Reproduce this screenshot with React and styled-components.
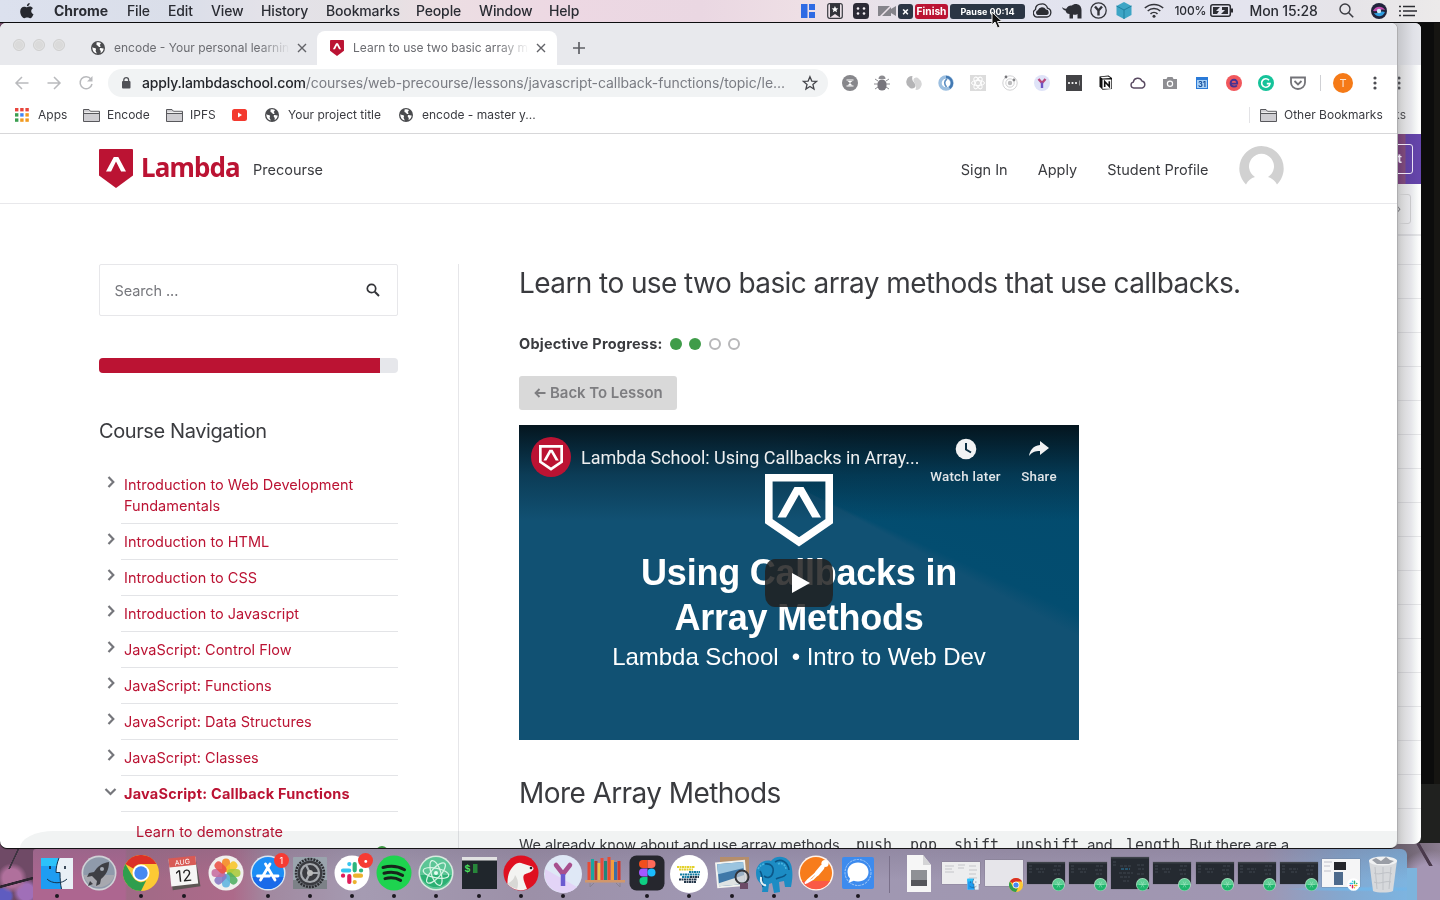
import React from "react";
import styled, { createGlobalStyle, css } from "styled-components";

const ui = `Inter, "Liberation Sans", sans-serif`;
const red = "#bb1333";

const GlobalStyle = createGlobalStyle`
  * { box-sizing: border-box; }
  body { margin: 0; font-family: ${ui}; overflow: hidden; }
  svg { display: block; flex: none; }
`;

/* ---------- desktop ---------- */
const Desktop = styled.div`
  position: relative;
  width: 1440px;
  height: 900px;
  overflow: hidden;
  display: flex;
  flex-direction: column;
  background:
    linear-gradient(115deg, transparent 0 40%, #3c3340 41% 44%, transparent 45%) 0 849px / 34px 20px no-repeat,
    linear-gradient(165deg, transparent 0 46%, #2e2530 48% 54%, transparent 56%) 0 870px / 34px 24px no-repeat,
    radial-gradient(circle at 12px 878px, #b0709c 0 9px, transparent 15px),
    radial-gradient(circle at 26px 892px, #a06fb8 0 8px, transparent 13px),
    radial-gradient(circle at 4px 896px, #5f5cc0 0 7px, transparent 10px),
    linear-gradient(60deg, transparent 0 45%, #4a3a4c 47% 53%, transparent 55%) 1408px 842px / 32px 24px no-repeat,
    linear-gradient(#7db4dd, #7db4dd) 1407px 868px / 10px 32px no-repeat,
    radial-gradient(circle at 1430px 884px, #a596b4 0 20px, transparent 34px),
    linear-gradient(90deg, #6f4a66 0 34px, #7b7484 60px 1380px, #6a5f6c 1400px, #8b7d90 1440px);
`;
const Stage = styled.div`
  position: relative;
  height: 826px;
  flex: none;
`;
const Terminal = styled.div`
  position: absolute;
  left: 1380px;
  top: 0;
  width: 60px;
  height: 820px;
  background: linear-gradient(90deg, #0c0c0c 0 54px, #161512 54px);
  border-bottom: 59px solid #20211f;
`;
const BackWindow = styled.div`
  position: absolute;
  left: 1300px;
  top: 0;
  width: 121px;
  height: 821px;
  display: flex;
  flex-direction: column;
  background: linear-gradient(90deg, #bfbfc1 97px, #d2d2d3 101px, #dcdcde 105px, #e6e6ea 111px, #f1f3f3 115px, #fdfdfd 119px);
  border-radius: 0 6px 7px 0;
  overflow: hidden;
  color: #4c4c50;
  font-size: 12px;
`;
const BackTabs = styled.div`
  flex: none;
  height: 42px;
  background: linear-gradient(90deg, #c4c5c9 97px, #e0e1e7 113px, #e6e7ec);
`;
const BackTools = styled.div`
  flex: none;
  height: 69px;
  padding: 11px 20px 0 0;
  display: flex;
  flex-direction: column;
  align-items: flex-end;
  gap: 18px;
  line-height: 14px;
  div { margin-right: -5px; }
`;
const BackBanner = styled.div`
  flex: none;
  height: 50px;
  background: linear-gradient(90deg, #6b3b72 97px, #7d4a78 105px, #5f40a0 106px, #6545ac);
  display: flex;
  justify-content: flex-end;
  padding: 10px 8px;
  span {
    width: 40px; height: 30px; border: 1px solid #e9e2f2; border-radius: 3px;
    color: #e7e0ee; font-weight: 700; font-size: 12px; line-height: 28px; text-align: right; padding-right: 10px;
  }
`;
const BackList = styled.div`
  flex: 1;
  min-height: 0;
  padding-top: 10px;
  span {
    display: block; margin: 0 10px 10px auto; width: 60px; height: 30px; border: 1px solid #c8c8ca; border-radius: 3px;
    text-align: right; padding-right: 9px; line-height: 27px; color: #77777c;
  }
  i { display: block; height: 34px; border-top: 1px solid rgba(120,120,130,.17); }
  i:first-of-type { height: 30px; border-top-width: 2px; }
`;
const FrontWindow = styled.div`
  position: absolute;
  left: 0;
  top: 0;
  width: 1397px;
  height: 825px;
  background: #fff;
  border-radius: 6px 6px 7px 7px;
  overflow: hidden;
  display: flex;
  flex-direction: column;
  box-shadow: 1px 0 0 #aeaeb0, 0 1px 1px 0 #0a0a0a;
`;

/* ---------- menu bar ---------- */
const Bar = styled.div`
  height: 23px;
  flex: none;
  display: flex;
  align-items: center;
  position: relative;
  z-index: 2;
  padding-left: 20px;
  border-bottom: 1px solid #0c0c0e;
  font-weight: 500;
  font-size: 14px;
  letter-spacing: -0.15px;
  color: #2a2c33;
  white-space: nowrap;
  background: linear-gradient(90deg, #dce1ee 0, #dadee9 180px, #e3e2e9 260px, #e4e1e4 380px, #ecdfe3 430px, #edd8e3 560px, #ead7e2 700px, #eedfe5 800px, #e8e2ea 880px, #e2e3ef 1000px, #e4e4ee 1250px, #e6e4e8 1350px, #eceaea);
`;
const Slot = styled.span`
  flex: none;
  display: flex;
  align-items: center;
  padding-bottom: 1px;
  width: ${(p) => p.$w}px;
  margin-left: ${(p) => p.$gap || 0}px;
  ${(p) => p.$bold && css`font-weight: 700; letter-spacing: 0;`}
  ${(p) => p.$size && css`font-size: ${p.$size}px;`}
`;
const Pill = styled.span`
  flex: none;
  display: flex;
  align-items: center;
  justify-content: center;
  height: 15px;
  width: ${(p) => p.$w}px;
  margin-left: ${(p) => p.$gap || 0}px;
  border-radius: 3px;
  background: ${(p) => p.$bg};
  color: #fff;
  font-weight: 700;
  letter-spacing: 0;
  font-size: ${(p) => p.$size}px;
`;
const Cursor = styled.svg`
  position: absolute;
  left: 990px;
  top: 11px;
  z-index: 3;
`;

/* ---------- browser chrome ---------- */
const Tabs = styled.div`
  height: 42px;
  flex: none;
  background: #e8e9ed;
  display: flex;
  align-items: flex-end;
`;
const Lights = styled.div`
  display: flex;
  gap: 8px;
  padding: 0 26px 14px 13px;
  i { width: 12px; height: 12px; border-radius: 50%; background: #dadada; border: 1px solid #d0d0d0; box-shadow: inset 0 0 0 1px #e3e3e3; }
`;
const Tab = styled.div`
  display: flex;
  align-items: center;
  width: ${(p) => (p.$active ? 240 : 226)}px;
  height: 34px;
  padding: 0 10px 0 ${(p) => (p.$active ? 13 : 0)}px;
  border-radius: 8px 8px 0 0;
  background: ${(p) => (p.$active ? "#fff" : "transparent")};
  font-size: 12px;
  color: #6b6c71;
`;
const TabTitle = styled.span`
  width: 177px;
  margin: 0 6px 0 9px;
  padding-bottom: 1px;
  overflow: hidden;
  white-space: nowrap;
  mask-image: linear-gradient(90deg, #000 145px, transparent 176px);
`;
const NewTab = styled.div`padding: 0 0 11px 16px;`;
const Tools = styled.div`
  height: 36px;
  flex: none;
  display: flex;
  align-items: center;
  padding-left: 14px;
`;
const NavIcons = styled.div`display: flex; gap: 16px; width: 94px;`;
const Omnibox = styled.div`
  width: 720px;
  height: 28px;
  border-radius: 14px;
  background: #f1f3f4;
  display: flex;
  align-items: center;
  padding: 0 10px 0 11px;
  font-size: 14px;
  color: #7a7c83;
  white-space: nowrap;
  b { font-weight: 500; color: #24262b; letter-spacing: -0.17px; }
`;
const Url = styled.span`width: 660px; margin-left: 9px; padding-bottom: 1px; letter-spacing: -0.075px;`;
const Ext = styled.div`
  width: 32px;
  display: flex;
  justify-content: center;
`;
const Extensions = styled.div`display: flex; align-items: center; margin-left: 6px;`;
const Rule = styled.div`width: 1px; height: 16px; background: #cfd0d4; margin: 0 12px 0 6px;`;
const Avatar = styled.div`
  width: 20px; height: 20px; border-radius: 50%; background: #f57a17; color: #fbe3cf;
  font-size: 11px; line-height: 20px; text-align: center; margin-right: 20px;
`;
const Bookmarks = styled.div`
  height: 33px;
  flex: none;
  display: flex;
  align-items: flex-start;
  padding: 6px 0 0 15px;
  border-bottom: 1px solid #d7d7d9;
  font-size: 12px;
  line-height: 15px;
  color: #3a3b40;
  white-space: nowrap;
`;
const Mark = styled.div`
  height: 16px;
  display: flex;
  align-items: flex-start;
  gap: ${(p) => p.$g || 8}px;
  width: ${(p) => p.$w}px;
  svg { margin-block: auto; }
  ${(p) => p.$last && css`margin-left: auto; padding-left: 10px; border-left: 1px solid #e3e3e6;`}
`;

/* ---------- page ---------- */
const Page = styled.div`
  position: relative;
  flex: 1;
  min-height: 0;
  color: #3a3b3f;
`;
const SiteHeader = styled.div`
  height: 70px;
  border-bottom: 1px solid #e8e8eb;
  display: flex;
  align-items: flex-start;
  padding: 15px 113px 0 99px;
  font-size: 14.5px;
`;
const Wordmark = styled.span`
  width: 98px;
  margin: 0 0 0 8px;
  font: 700 26px/37px "Noto Sans", sans-serif;
  letter-spacing: -0.85px;
  color: ${red};
`;
const NavLink = styled.span`
  margin-left: ${(p) => p.$gap}px;
  padding-top: 12px;
  line-height: 18px;
  white-space: nowrap;
`;
const Gravatar = styled.svg`margin: -3px 0 0 30.5px;`;
const Spacer = styled.div`flex: 1;`;
const Columns = styled.div`
  display: flex;
  padding: 60px 0 0 99px;
  height: 644px;
  overflow: hidden;
`;
const Sidebar = styled.div`
  width: 360px;
  padding-right: 60px;
  border-right: 1px solid #e6e6e9;
  flex: none;
`;
const SearchBox = styled.div`
  height: 52px;
  border: 1px solid #e7e7ea;
  border-radius: 2px;
  display: flex;
  align-items: center;
  justify-content: space-between;
  padding: 0 17px 0 14.5px;
  font-size: 14.5px;
  letter-spacing: -0.1px;
  color: #77787d;
`;
const Progress = styled.div`
  height: 15px;
  margin-top: 42px;
  border-radius: 4px;
  background: #e6e7eb;
  overflow: hidden;
  div { width: 94%; height: 100%; background: ${red}; }
`;
const SideTitle = styled.h3`
  margin: 44px 0 22px;
  font-size: 20px;
  line-height: 28px;
  font-weight: 400;
  letter-spacing: -0.4px;
`;
const Item = styled.div`
  display: flex;
  padding-left: 5px;
  color: ${red};
  font-size: 14.5px;
  line-height: 21px;
  ${(p) => p.$open && css`font-weight: 700; letter-spacing: 0.22px;`}
  svg { margin: 9px 3px 0 0; }
`;
const ItemText = styled.div`
  flex: 1;
  padding: 7px 30px 7px 3px;
  border-bottom: 1px solid #e3e4e7;
`;
const SubItem = styled.div`
  display: flex;
  padding: 9px 10px 0 37px;
  justify-content: space-between;
  color: ${red};
  font-size: 14.5px;
  line-height: 21px;
  i { width: 12px; height: 12px; border-radius: 50%; background: #43a047; margin-top: 25px; }
`;
const Main = styled.div`padding-left: 60px; width: 860px;`;
const Heading = styled.h2`
  margin: ${(p) => p.$m};
  font-size: 28px;
  line-height: 38px;
  font-weight: 400;
  letter-spacing: -0.58px;
  white-space: nowrap;
`;
const Objective = styled.div`
  display: flex;
  align-items: center;
  margin-top: 32px;
  height: 20px;
  font-size: 14.5px;
  font-weight: 700;
  span { width: 151px; padding-bottom: 1px; letter-spacing: 0.22px; }
`;
const Dot = styled.i`
  width: 12px;
  height: 12px;
  border-radius: 50%;
  margin-right: 7.3px;
  background: ${(p) => (p.$on ? "#3f9c49" : "#fff")};
  border: ${(p) => (p.$on ? "0" : "2px solid #b7b7b9")};
`;
const BackButton = styled.div`
  display: flex;
  align-items: center;
  gap: 4px;
  width: 158px;
  height: 34px;
  margin: 22px 0 15px;
  padding: 0 0 1px 15px;
  border-radius: 3px;
  background: #d9d9d9;
  color: #7d7d80;
  font-size: 15px;
  font-weight: 600;
  letter-spacing: -0.05px;
  white-space: nowrap;
`;
const Video = styled.div`
  position: relative;
  width: 560px;
  height: 315px;
  background:
    linear-gradient(180deg, rgba(4,18,26,.95), rgba(4,26,38,.75) 24px, rgba(5,35,52,.45) 50px, transparent 96px),
    conic-gradient(from 118deg at 50% 20%, #115173 0 60%, #034a6c 88%, #034d70 99%, #115173 100%);
  overflow: hidden;
  color: #fff;
`;
const VideoTop = styled.div`
  display: flex;
  padding: 12px 12px 0 12px;
  height: 49px;
  font-family: Roboto, sans-serif;
`;
const VideoTitle = styled.div`
  width: 358.5px;
  padding: 9px 0 0 10px;
  font-size: 18px;
  line-height: 24px;
  letter-spacing: -0.03px;
  color: #eeeff0;
  white-space: nowrap;
`;
const VideoAction = styled.div`
  display: flex;
  flex-direction: column;
  align-items: center;
  gap: 6.5px;
  width: ${(p) => p.$w}px;
  margin-right: ${(p) => p.$mr || 0}px;
  font-size: 13.3px;
  line-height: 17px;
  font-weight: 500;
  letter-spacing: 0.28px;
  color: #e2e6e9;
  white-space: nowrap;
`;
const Poster = styled.div`
  display: flex;
  flex-direction: column;
  align-items: center;
  font-family: "Liberation Sans", Arial, sans-serif;
  white-space: pre;
  strong { font-size: 36px; line-height: 45px; letter-spacing: -0.24px; }
  strong:first-of-type { margin-top: 3px; }
  span { font-size: 24px; line-height: 34px; letter-spacing: -0.04px; }
`;
const Play = styled.div`
  position: absolute;
  left: 246px;
  top: 134px;
  width: 68px;
  height: 48px;
  padding-left: 4px;
  border-radius: 10px / 12px;
  background: rgba(33,33,33,.86);
  display: flex;
  align-items: center;
  justify-content: center;
`;
const Para = styled.div`
  display: flex;
  font-size: 14.5px;
  line-height: 24px;
  letter-spacing: -0.04px;
  white-space: nowrap;
`;
const Word = styled.span`
  flex: none;
  width: ${(p) => p.$w}px;
`;
const Code = styled.code`
  flex: none;
  font: 15px/24px "DejaVu Sans Mono", monospace;
  letter-spacing: 0;
  width: ${(p) => p.$w}px;
`;
const StatusShade = styled.div`
  position: absolute;
  left: 20px;
  right: 0;
  bottom: 0;
  height: 17px;
  border-radius: 34px 0 0 0 / 17px 0 0 0;
  background: #f1f3f3;
  mix-blend-mode: multiply;
`;

/* ---------- dock ---------- */
const DockBar = styled.div`
  position: absolute;
  left: 33px;
  top: 849px;
  width: 1374px;
  height: 51px;
  display: flex;
  padding-left: 3px;
  border-radius: 3px 6px 0 0;
  background:
    radial-gradient(ellipse at 1340px 40px, #74b5e6 0 30px, transparent 90px),
    linear-gradient(180deg, rgba(110,100,125,.28), transparent 32px),
    linear-gradient(90deg, #ad6690 0 92px, #a06a86 94px, #ad6a8a 200px, #a189a0 235px, #a59bb2 330px, #9c90a8 500px, #a098b4 700px, #a097b0 1000px, #a096b2 1230px, #83a8d0 1310px, #7db4e0);
`;
const DockItem = styled.div`
  position: relative;
  flex: none;
  width: ${(p) => p.$w || 42.16}px;
  height: 51px;
  display: flex;
  flex-direction: column;
  align-items: center;
  padding-top: 6px;
  gap: 3px;
  i { position: absolute; top: 45px; width: 4px; height: 4px; border-radius: 50%; background: #1c1820; }
`;
const DockRule = styled.div`width: 1px; height: 37px; margin: 7px 8.5px 0 9.5px; background: #7a708a; flex: none;`;
const Badge = styled.span`
  position: absolute;
  right: 0;
  top: 4px;
  width: 15px;
  height: 15px;
  border-radius: 50%;
  background: #f63b33;
  color: #fff;
  font-size: 9px;
  line-height: 15px;
  text-align: center;
`;
const Thumb = styled.div`
  width: 38px;
  height: ${(p) => p.$h || 22}px;
  margin-top: ${(p) => p.$mt || 7}px;
  background: ${(p) => p.$bg};
  box-shadow: 0 0 1px #3338;
  display: flex;
  overflow: hidden;
`;
const Corner = styled.div`position: absolute; right: ${(p) => p.$r || 2}px; top: 29px;`;

/* ---------- icons ---------- */
const Svg = ({ s = 16, w, h, vb, children, ...r }) => (
  <svg width={w || s} height={h || s} viewBox={vb || `0 0 ${w || s} ${h || s}`} fill="none" {...r}>{children}</svg>
);
const Globe = () => (
  <Svg s={14}>
    <circle cx="7" cy="7" r="7" fill="#4a4b4e" />
    <path d="M1.300 6.200C2.500 7.200 4.600 6.600 5 7.800c.3 1-.6 1.200-.3 2.300.2.7.7 1 1 2.400C3 12 1.200 9.600 1.300 6.200zM5.500 1.600C7 1 8.600 1.200 9.800 1.900c.2 1-1 1.300-1 2.200 0 .8 1 .6.8 1.500-.3.9-2.200.3-2.400-.6-.2-.8-1.100-.4-1.600-1.100-.4-.8.2-1.500-.1-2.300zM9 7.300c1.200-.6 2.300.4 3.700.2-.2 2-1.300 3.700-3 4.600-.3-.9.4-1.600-.1-2.300-.5-.8-1.500-1.600-.6-2.500z" fill="#fff" />
  </Svg>
);
const Close = () => <Svg s={10}><path d="M1 1l8 8M9 1L1 9" stroke="#626368" strokeWidth="1.400" /></Svg>;
const Shield = ({ w, h, fill = red, mark = "#fff" }) => (
  <Svg w={w} h={h} vb="0 0 34 39">
    <path d="M1 0h32a1 1 0 0 1 1 1v25.500L17 39 0 26.500V1a1 1 0 0 1 1-1z" fill={fill} />
    <path d="M14.800 8h4.500L27 22.500h-4.900L17 12.600l-4.900 9.900H7z" fill={mark} />
  </Svg>
);
const OutlineShield = ({ w, h }) => (
  <Svg w={w} h={h} vb="0 0 68 73">
    <path d="M3.800 3.800h60.400v43.400L34 68 3.800 47.200z" stroke="#fff" strokeWidth="7.600" />
    <path d="M29.500 13h9L56 43.500h-8.800L34 20.500 21 43.500h-8.500z" fill="#fff" />
  </Svg>
);
const Folder = () => (
  <Svg w={17} h={13}><path d="M.5 12.500v-12h5.500l1.500 1.800h9v10.200z" fill="#cfced2" stroke="#58585c" /><path d="M1 4.500h15" stroke="#58585c" /><path d="M1.500 3.400h14" stroke="#f4f4f4" /></Svg>
);
const AppsGrid = () => (
  <Svg s={14}>
    {["#e8453c", "#e8453c", "#e8453c", "#3a9e50", "#4285f4", "#f29a1f", "#3a9e50", "#f29a1f", "#f29a1f"].map((c, i) => (
      <rect key={i} x={(i % 3) * 5.200} y={Math.floor(i / 3) * 5.200} width="3.400" height="3.400" fill={c} />
    ))}
  </Svg>
);
const Dots = () => <Svg w={4} h={14}>{[2, 7, 12].map((y) => <circle key={y} cx="2" cy={y} r="1.600" fill="#4c4d52" />)}</Svg>;
const Chevron = ({ open }) =>
  open ? <Svg w={14} h={14}><path d="M1.500 4l5 5 5-5" stroke="#75767b" strokeWidth="2.200" /></Svg>
    : <Svg w={14} h={14}><path d="M4.500 1l4.800 5-4.800 5" stroke="#75767b" strokeWidth="2.200" /></Svg>;

const extIcons = [
  <Svg s={16}><circle cx="8" cy="8" r="8" fill="#87878b" /><path d="M4.500 5h7M4.500 11h7" stroke="#fff" strokeWidth="1.200" /><path d="M5.500 6h5L8 8zM5.500 10.500L8 8l2.500 2.500z" fill="#fff" /></Svg>,
  <Svg s={16}><path d="M1 4l3 2M15 4l-3 2M0 9h4M16 9h-4M1 14l3-2M15 14l-3-2" stroke="#8d8c91" /><rect x="3.500" y="4.500" width="9" height="11" rx="4.500" fill="#77757c" /><path d="M4.500 4a3.500 3.500 0 0 1 7 0z" fill="#8c8b90" /></Svg>,
  <Svg s={16}><path d="M6.500 1A6 6 0 0 0 3 12c2.500 3 7 1 6.500-2C9 7 5 6.500 6.500 1z" fill="#b4b4b6" /><path d="M9.500 15A6 6 0 0 0 13 4c-2.500-3-6-1-5.500 1.500C8 8.500 11 9.500 9.500 15z" fill="#d6d6d7" /></Svg>,
  <Svg s={16}><circle cx="8" cy="8" r="6" stroke="#9cbfe0" strokeWidth="3.400" /><path d="M8 2a6 6 0 0 1 6 6c0 2-1 4-2.500 5" stroke="#4379b3" strokeWidth="2.400" /><path d="M9 4C6 6 6 9 8.500 12" stroke="#5c8ec2" strokeWidth="1.600" /></Svg>,
  <Svg s={16}><rect width="16" height="16" fill="#dcdcdc" /><g stroke="#fff"><ellipse cx="8" cy="8" rx="6.500" ry="2.600" /><ellipse cx="8" cy="8" rx="6.500" ry="2.600" transform="rotate(60 8 8)" /><ellipse cx="8" cy="8" rx="6.500" ry="2.600" transform="rotate(120 8 8)" /></g></Svg>,
  <Svg s={16}><circle cx="8" cy="8" r="7.200" stroke="#d2d2d4" /><circle cx="8" cy="8" r="4.200" stroke="#d2d2d4" /><circle cx="8" cy="8" r="2.200" fill="#bcbcbe" /><circle cx="4" cy="2" r="1.400" fill="#77777b" /><circle cx="12" cy="5" r="1.400" fill="#88888b" /></Svg>,
  <Svg s={16}><circle cx="8" cy="8" r="8" fill="#dfe3f8" /><path d="M4.500 4L8 8l3.500-4" stroke="#b8457a" strokeWidth="2.400" /><path d="M8 7.500V13" stroke="#6d54c4" strokeWidth="2.400" /></Svg>,
  <Svg s={16}><rect y="0" width="16" height="16" fill="#434346" /><g fill="#fff"><circle cx="3" cy="8" r="1.100" /><circle cx="6.500" cy="8" r="1.100" /><circle cx="10" cy="8" r="1.100" /><rect x="13" y="5.500" width=".8" height="5" opacity=".6" /></g></Svg>,
  <Svg s={16}><path d="M1.500 1.500l9-1L14 3v11l-9.500.8-3-3.300z" fill="#111" /><path d="M2.500 2l7.500-.6 2.500 1.500-8 .5z" fill="#fff" /><rect x="4.500" y="4.500" width="8.800" height="9.300" fill="#fff" /><path d="M6.700 12V6.500l4.600 5V6.200" stroke="#111" strokeWidth="1.600" /></Svg>,
  <Svg s={16}><path d="M3.800 13a3 3 0 0 1-.5-5.900A4.500 4.500 0 0 1 11.900 6a3.600 3.600 0 0 1 .3 7z" stroke="#5a4b62" strokeWidth="1.400" /></Svg>,
  <Svg s={16}><path d="M1 4h3.500l1-2h5l1 2H15v10H1z" fill="#8e8e92" /><circle cx="8" cy="8.700" r="3.200" fill="#fff" /><circle cx="8" cy="8.700" r="2" fill="#8e8e92" /></Svg>,
  <Svg s={16}><rect x="2" y="2" width="12" height="12" fill="#2a7ad8" /><rect x="3" y="5" width="10" height="8" fill="#a9d1f6" /><text x="8" y="11.600" fontSize="7.500" fontWeight="700" textAnchor="middle" fill="#164f9c">31</text></Svg>,
  <Svg s={16}><circle cx="8" cy="8" r="8" fill="#f1575c" /><path d="M4.800 8.600h6.400c.2-2.300-1.200-3.800-3.200-3.800S4.600 6.200 4.600 8.200s1.400 3.300 3.400 3.300c1.200 0 2.200-.4 2.900-1.200" stroke="#483291" strokeWidth="1.900" /></Svg>,
  <Svg s={16}><circle cx="8" cy="8" r="8" fill="#15c39a" /><path d="M11 5.200A4.200 4.200 0 1 0 12 8.600H8.800" stroke="#fff" strokeWidth="1.600" /></Svg>,
  <Svg s={16}><path d="M1 2.500h14V7.500a7 6.500 0 0 1-14 0z" stroke="#737378" strokeWidth="1.800" /><path d="M4.500 6L8 9.400 11.500 6" stroke="#737378" strokeWidth="1.800" /></Svg>,
];

const Finder = ({ s = 34 }) => (
  <Svg s={s} vb="0 0 34 34"><rect x="1" y="2" width="32" height="31" fill="#e9f0f6" /><path d="M1 2h18c-2 5-3 10-3 14h4c0 7 .5 12 1.500 17H1z" fill="#1e9df2" /><path d="M1 2h18c-1 3-2 5-2.500 8H1z" fill="#2bc2fa" /><path d="M10 10v3M25 10v3" stroke="#123" strokeWidth="1.600" /><path d="M7 23c5 5 15 5 20 0M19 2c-2 5-3 10-3 14.500h4c0 7 .5 12 1.500 16.500" stroke="#16324a" /></Svg>
);
const Chrome = ({ s = 36 }) => (
  <Svg s={s} vb="0 0 36 36"><circle cx="18" cy="18" r="18" fill="#fcc934" /><path d="M2.400 9A18 18 0 0 1 33.600 9H18a9 9 0 0 0-7.800 4.500z" fill="#db3027" /><path d="M2.400 9l7.800 13.500a9 9 0 0 0 13 3L18 36A18 18 0 0 1 2.400 9z" fill="#2f9e4d" /><circle cx="18" cy="18" r="8.500" fill="#fff" /><circle cx="18" cy="18" r="6.700" fill="#4688f1" /></Svg>
);
const Slack = ({ s = 36 }) => (
  <Svg s={s} vb="0 0 36 36"><circle cx="18" cy="18" r="17.500" fill="#fff" /><g strokeWidth="4.200" strokeLinecap="round"><path d="M15.300 9v.1M9 15.500h6.200" stroke="#36c5f0" /><path d="M20.700 9v6.300M27 15.500h.1" stroke="#2eb67d" /><path d="M15.300 21v6M9 20.700h.1" stroke="#e01e5a" /><path d="M20.700 27v.1M21 20.700h6" stroke="#ecb22e" /></g></Svg>
);
const Atom = ({ s = 36 }) => (
  <Svg s={s} vb="0 0 36 36"><circle cx="18" cy="18" r="17.500" fill="#d8eadf" /><circle cx="18" cy="18" r="16" fill="#5cc596" /><path d="M2.500 20a16 16 0 0 0 31 0z" fill="#2bb073" /><g stroke="#d9f5e5" strokeWidth="1.200"><ellipse cx="18" cy="18" rx="13" ry="4.800" transform="rotate(12 18 18)" /><ellipse cx="18" cy="18" rx="13" ry="4.800" transform="rotate(72 18 18)" /><ellipse cx="18" cy="18" rx="13" ry="4.800" transform="rotate(132 18 18)" /></g><circle cx="18" cy="18" r="2" fill="#e6fff1" /></Svg>
);
const AtomBadge = () => (
  <Svg s={13}><circle cx="6.500" cy="6.500" r="6.500" fill="#a9e0c0" /><circle cx="6.500" cy="6.500" r="5.700" fill="#5fce95" /><path d="M1 7a5.500 5.500 0 0 0 11 0z" fill="#1fb56d" /><path d="M3 6.500h7M5 3.500l3 6M8 3.500l-3 6" stroke="#a5e8c5" strokeWidth=".5" /></Svg>
);
const petals = ["#f5871f", "#f7c427", "#a9c83a", "#4fae62", "#5fb4e0", "#8678c4", "#c66c9f", "#ea5146"];
const books = [["#e64b35", 3, 8], ["#1aa7a1", 6.500, 5], ["#b03a2e", 10, 7], ["#f0c14b", 13, 9], ["#e74c3c", 16, 4], ["#21867a", 19.500, 7], ["#e84c30", 23, 3], ["#f39c3d", 26.500, 6], ["#3d6ea5", 29.500, 8], ["#d03a2f", 33, 7]];

const dockApps = [
  { run: 1, icon: <Svg s={36}><g transform="translate(1 1)"><Finder /></g></Svg> },
  { icon: <Svg s={36}><circle cx="18" cy="18" r="17.500" fill="#d0d1d6" /><circle cx="18" cy="18" r="15.800" fill="#8f9aab" /><path d="M2.500 20a16 16 0 0 0 31 0z" fill="#a7a8af" /><path d="M28 7c-7 1-11 4-15 10l-5 1-2 4 5-1 5 5-1 5 4-2 1-5c5-4 8-9 8-17zM9 26l-2 5 5-2z" fill="#3e3f45" /><circle cx="21" cy="14" r="2" fill="#a5abb5" /></Svg> },
  { run: 1, icon: <Chrome /> },
  { run: 1, icon: <Svg s={36}><g transform="rotate(-6 18 18)"><path d="M4 4h27l2 29-28 1z" fill="#5c5654" /><rect x="4" y="3" width="27" height="27" fill="#f6f6f5" /><rect x="4" y="2" width="27" height="9" fill="#d85a55" /><text x="17.500" y="9.500" fontSize="7" textAnchor="middle" fill="#fff">AUG</text><text x="17.500" y="26.500" fontSize="16" textAnchor="middle" fill="#222">12</text></g></Svg> },
  { icon: <Svg s={36}><circle cx="18" cy="18" r="17.500" fill="#f0f0ee" />{petals.map((c, i) => <rect key={c} x="14" y="3.500" width="8" height="13.500" rx="4" fill={c} opacity=".88" transform={`rotate(${i * 45} 18 18)`} />)}</Svg> },
  { run: 1, badge: "1", icon: <Svg s={36}><circle cx="18" cy="18" r="17.500" fill="#dbe6f1" /><circle cx="18" cy="18" r="16" fill="#1c8df5" /><path d="M2.500 22a16 16 0 0 0 31 0z" fill="#1a6ae9" /><path d="M20 9l-9.500 16M15.500 9L25 25M7.500 21h12M23 21h5" stroke="#fff" strokeWidth="2.800" strokeLinecap="round" /></Svg> },
  { run: 1, icon: <Svg s={36}><rect x="1" y="2" width="34" height="32" rx="1" fill="#9aa4ad" /><rect x="1" y="25" width="34" height="9" fill="#7c8187" /><circle cx="18" cy="18" r="14" stroke="#2c2d31" strokeWidth="2.500" strokeDasharray="2 1" /><circle cx="18" cy="18" r="12.500" fill="#3a3b40" /><circle cx="18" cy="18" r="9" stroke="#a5a8ad" strokeWidth="2.200" /><path d="M18 18L14 10M18 18h9M18 18l-4 8" stroke="#a5a8ad" strokeWidth="2.200" /><circle cx="18" cy="18" r="3" fill="#bbb" /></Svg> },
  { run: 1, badge: "•", icon: <Slack /> },
  { run: 1, icon: <Svg s={36}><circle cx="18" cy="18" r="17.500" fill="#1ed34f" /><path d="M7 12.500c7-2 15-1.500 21.500 2.200M8 18.300c6-1.800 13-1.200 18.600 2.100M9 23.600c5-1.400 11-1 15.600 1.800" stroke="#17251b" strokeWidth="3" strokeLinecap="round" /></Svg> },
  { run: 1, icon: <Atom /> },
  { run: 1, icon: <Svg s={36}><rect x="1" y="2" width="35" height="32" fill="#20262c" /><rect x="1" y="2" width="35" height="3.500" fill="#e2e2e2" /><text x="3.500" y="17" fontSize="10" fontWeight="700" fontFamily="Liberation Mono" fill="#4be05d">$</text><rect x="12" y="9" width="4.500" height="9" fill="#27863a" /></Svg> },
  { run: 1, icon: <Svg s={36}><circle cx="18" cy="18" r="17.500" fill="#df1020" /><path d="M4.500 29c0-7 1-13 6-18 3-3 6-4 9-2.500L29 11.500c2 1 2 3 0 4.500-3 2.500-6 2-8 4-2 3 1 8 3 14-8 3-15 0-19.500-5z" fill="#f3f3f1" /><path d="M12 20c3 4 4 9 2 14-4-1-8-3-9.500-5.500C7.500 27 11 25 12 20z" fill="#d8d8d5" /><circle cx="28" cy="13" r="1.300" fill="#222" /></Svg> },
  { run: 1, icon: <Svg s={38}><circle cx="19" cy="19" r="19" fill="#dfe8f6" /><path d="M1 14l32 18a19 19 0 0 1-32-9z" fill="#e3d4f7" /><path d="M12 10l7 9 7-9" stroke="#a8508e" strokeWidth="4.500" strokeLinecap="round" strokeLinejoin="round" /><path d="M19 19v12" stroke="#6a5bd0" strokeWidth="4.500" /></Svg> },
  { icon: <Svg w={40} h={36}>{books.map(([c, x, y]) => <rect key={x} x={x - 0.5} y={y - 1} width="3" height={26 - y} fill={c} />)}<rect x="0" y="25" width="40" height="2.500" fill="#d2976b" /><path d="M5 28v4l4-4M35 28v4l-4-4" stroke="#8a8290" /></Svg> },
  { run: 1, icon: <Svg s={36}><rect x=".5" y=".5" width="35" height="35" rx="7" fill="#26272e" /><path d="M14 5h4.500v8H14a4 4 0 0 1 0-8z" fill="#f24e1e" /><path d="M18.500 5h4a4 4 0 0 1 0 8h-4z" fill="#ff6a5a" /><path d="M14 13.500h4.500v8H14a4 4 0 0 1 0-8z" fill="#a259ff" /><circle cx="22.500" cy="17.500" r="4" fill="#1abcfe" /><path d="M14 22h4.500v4a4 4 0 1 1-4.500-4z" fill="#0ecf83" /></Svg> },
  { run: 1, icon: <Svg s={38}><circle cx="19" cy="19" r="19" fill="#fff" /><g strokeWidth="1.800" strokeDasharray="2 .5"><path d="M7 12h18M9 14.500h14" stroke="#e3d12d" /><path d="M19 17h11M10 19.500h20M12 22h8" stroke="#167ca0" /><path d="M20 22h9M9 24.500h18M14 27h12" stroke="#24374a" /></g></Svg> },
  { run: 1, icon: <Svg s={36}><rect x="6" y="2" width="29" height="22" fill="#b58e6b" /><g transform="rotate(-5 18 18)"><rect x="2" y="6" width="30" height="26" fill="#f3f3f0" /><rect x="4" y="8" width="26" height="22" fill="#3f78a8" /><path d="M4 8h26v6L4 18z" fill="#9bc4df" /><path d="M4 27l26-6v9H4z" fill="#dfe3e3" /></g><circle cx="28" cy="22" r="6.500" fill="#c8cbd2aa" stroke="#33343a" strokeWidth="2" /><path d="M26 28h8v6h-8z" fill="#6c4a66" /></Svg> },
  { run: 1, icon: <Svg s={38}><path d="M1 18C1 10 8 4 16 6 21-1 36 0 37 14c1 7 0 12-1 18h-6l-1-6-5 1 1 10-6 1-2-10-3 1-1 8H7c1-5 0-7-2-9-3-3-4-6-4-10z" fill="#1c8cc4" /><path d="M10 9c6-1 9 3 8 8s-5 7-9 4M20 7c6-4 13 0 14 8M5 16c3 4 2 10 3 16M21 24c3-2 8-1 10-5" stroke="#0c5788" strokeWidth="1.600" /><path d="M23 9c4-2 8 1 8 6M3 14c2-3 4-5 7-5" stroke="#48b4e0" strokeWidth="1.600" strokeDasharray="2 1" /><path d="M6 22c-1 5 2 9 5 8" stroke="#e6f1f4" strokeWidth="2" /></Svg> },
  { run: 1, icon: <Svg s={36}><circle cx="18" cy="18" r="17.500" fill="#fff3ea" /><circle cx="18" cy="18" r="16" fill="#f77c1b" /><path d="M4 26a16 16 0 0 0 28 0z" fill="#fa5a45" /><circle cx="27" cy="8.500" r="3.600" fill="#fff" /><path d="M24 12.500l-5 6" stroke="#fff" strokeWidth="5" strokeLinecap="round" /><path d="M18 18L10 25l-2.500 3M20 19l-5 5-6 3.500" stroke="#fff" strokeWidth="2" strokeLinecap="round" /></Svg> },
  { run: 1, icon: <Svg s={36}><rect x="2" y="2" width="32" height="32" rx="2" fill="#3d8bee" /><path d="M18 7.500c6 0 10.500 4 10.500 9.500S24 26.500 18 26.500c-1.500 0-3-.2-4.300-.8L8.500 28l1.500-4.500A9 9 0 0 1 7.500 17c0-5.500 4.500-9.500 10.500-9.500z" fill="#fff" /><circle cx="18" cy="17.500" r="13" stroke="#a8cdf8" strokeDasharray="2.500 1" /></Svg> },
];
const CodeLines = ({ tall }) => (
  <Svg w={38} h={tall ? 32 : 22}>
    <rect width="38" height={tall ? 32 : 22} fill="#252a31" /><rect width="38" height="1.500" fill="#3d4248" />
    <path d={tall ? "M9 9h12M8 16h14M9 20h10M12 24h6M26 8h8M27 12h6M26 17h8M27 22h5M2 5h4M2 8h3" : "M9 7h9M11 10h6M27 4h8M26 8h7M27 12h6M2 4h4M2 7h3M2 10h4"} stroke="#4a5560" strokeWidth=".7" strokeDasharray="3 1" />
    {tall && <path d="M10 12h9" stroke="#2d7fa8" strokeDasharray="3 1" />}
  </Svg>
);
const Star = "M8 1.200l2 4.700 5.100.4-3.900 3.300 1.200 5L8 11.900l-4.400 2.700 1.200-5L.9 6.300 6 5.900z";

const lessons = [
  "Introduction to Web Development Fundamentals",
  "Introduction to HTML",
  "Introduction to CSS",
  "Introduction to Javascript",
  "JavaScript: Control Flow",
  "JavaScript: Functions",
  "JavaScript: Data Structures",
  "JavaScript: Classes",
];

function MenuBar() {
  return (
    <Bar>
      <Slot $w={34}><Svg w={14} h={16}><path d="M9.700 0c.1 1.500-1.200 3.200-2.800 3.200C6.700 1.700 8.200.2 9.700 0zM7 4.300c.8 0 1.500-.7 2.900-.7 1.200 0 2.300.6 3 1.600-2.500 1.500-2.100 4.900.6 6-.6 1.700-2 4.100-3.400 4.100-1.100 0-1.500-.7-2.900-.7s-1.800.7-2.900.7C2.300 15.300.2 11.600.2 8.600c0-3.100 1.900-4.900 3.900-4.900 1.300 0 2.200.6 2.900.6z" fill="#26282e" /></Svg></Slot>
      <Slot $w={73} $bold>Chrome</Slot>
      <Slot $w={41}>File</Slot>
      <Slot $w={43}>Edit</Slot>
      <Slot $w={50}>View</Slot>
      <Slot $w={65}>History</Slot>
      <Slot $w={90}>Bookmarks</Slot>
      <Slot $w={63}>People</Slot>
      <Slot $w={70}>Window</Slot>
      <Slot $w={252}>Help</Slot>
      <Slot $w={14}><Svg s={14}><path d="M0 0h6.500v14H0zM8 0h6v6H8zM8 8h6v6H8z" fill="#2f6be4" /></Svg></Slot>
      <Slot $w={16} $gap={12}><Svg s={16}><rect x=".7" y=".7" width="14.600" height="14.600" rx="2" stroke="#3b3c42" strokeWidth="1.200" /><path d="M3 1h10v13.500L8 11l-5 3.500z" fill="#33343a" /><path d={Star} transform="translate(4.200 2.500) scale(.47)" fill="#fff" /></Svg></Slot>
      <Slot $w={16} $gap={10}><Svg s={16}><rect width="16" height="16" rx="3.500" fill="#2b2a35" />{[[5, 5.500], [11, 5.500], [5, 10.500], [11, 10.500]].map(([x, y]) => <circle key={x + "-" + y} cx={x} cy={y} r="1.300" fill="#f2eef2" />)}</Svg></Slot>
      <Slot $w={19} $gap={9}><Svg w={19} h={12}><path d="M0 1h13v3l5-3v10l-5-3v3H0z" fill="#85848b" /><path d="M2 12L14 0" stroke="#ece2ea" strokeWidth="1.500" /></Svg></Slot>
      <Pill $w={15} $gap={1} $bg="#2b3544" $size={11}>×</Pill>
      <Pill $w={33} $gap={2} $bg={red} $size={10.2}>Finish</Pill>
      <Pill $w={75} $gap={2} $bg="#2b3544" $size={9}>Pause 00:14</Pill>
      <Slot $w={19} $gap={8}><Svg w={19} h={15}><path d="M5 14a4 4 0 0 1-2.500-7.500A5 5 0 0 1 8 1.200c3-.9 6 1 6.500 4A4.500 4.500 0 0 1 14 14z" stroke="#2c2d33" strokeWidth="1.300" /><path d="M4.500 12a2.500 2.500 0 0 1 .3-4.700A4.500 4.500 0 0 1 13 6.600a2.800 2.800 0 0 1 1 5.400z" fill="#2c2d33" /></Svg></Slot>
      <Slot $w={20} $gap={10}><Svg w={20} h={16}><path d="M0 4c1.500 1.500 3 2 4.500 1.500C5.500 3 8 2 10 2.500 13-.5 19.500 1 19.500 7v8.500h-4V11c-1.500 1-3.500 1-4.500.5v4H7.500V11C5.500 11 4 10 3.500 7.500 2 7.500.5 6 0 4z" fill="#2e2f36" /></Svg></Slot>
      <Slot $w={17} $gap={7.5}><Svg s={17}><circle cx="8.500" cy="8.500" r="7.700" stroke="#33343a" strokeWidth="1.300" /><path d="M5 4.500l3.500 4 3.500-4M8.500 8.500v5" stroke="#33343a" strokeWidth="2.400" /></Svg></Slot>
      <Slot $w={16} $gap={9}><Svg w={16} h={17}><path d="M8 0l7.500 4v9L8 17 .5 13V4z" fill="#3da5c5" /><path d="M.5 4L8 8l7.500-4M8 8v9" stroke="#1f7f9e" /></Svg></Slot>
      <Slot $w={20} $gap={12}><Svg w={20} h={15}><path d="M.8 5a13.500 13.500 0 0 1 18.400 0M3.700 8a9.300 9.300 0 0 1 12.600 0M6.500 10.900a5.200 5.200 0 0 1 7 0" stroke="#33343a" strokeWidth="1.500" /><circle cx="10" cy="13.300" r="1.500" fill="#33343a" /></Svg></Slot>
      <Slot $w={35} $gap={11} $size={12}>100%</Slot>
      <Slot $w={24}><Svg w={24} h={13}><rect x=".8" y=".8" width="19.500" height="11.400" rx="2" stroke="#2c2d33" strokeWidth="1.500" /><path d="M22 4.500v4" stroke="#2c2d33" strokeWidth="2" /><path d="M3 3h7l-4 4h3l-2 3H3zM12 3h6v7h-7l4-4h-3z" fill="#2c2d33" /></Svg></Slot>
      <Slot $w={69} $gap={16}>Mon 15:28</Slot>
      <Slot $w={15} $gap={20}><Svg s={15}><circle cx="6" cy="6" r="5" stroke="#3a3b41" strokeWidth="1.400" /><path d="M9.700 9.700L14.200 14.200" stroke="#3a3b41" strokeWidth="1.600" /></Svg></Slot>
      <Slot $w={16} $gap={17.5}><Svg s={16}><circle cx="8" cy="8" r="8" fill="#20243c" /><path d="M2 8c2-5 9-6 12-1-4-2-7 2-12 1z" fill="#c14dae" /><path d="M3 10c4 1 7-3 11-1-2 5-8 6-11 1z" fill="#2f9ee0" /><circle cx="8" cy="8" r="2.200" fill="#d4ecf7" /></Svg></Slot>
      <Slot $w={18} $gap={12}><Svg w={18} h={12}><path d="M4 1.500h12M4 6h14M4 10.500h12" stroke="#2c2d33" strokeWidth="1.600" /><path d="M0 1.500h2M0 6h2M0 10.500h2" stroke="#2c2d33" strokeWidth="1.600" /></Svg></Slot>
    </Bar>
  );
}

export default function App() {
  return (
    <Desktop>
      <GlobalStyle />
      <MenuBar />
      <Stage>
        <Terminal />
        <BackWindow>
          <BackTabs />
          <BackTools><Dots /><div>ks</div></BackTools>
          <BackBanner><span>t</span></BackBanner>
          <BackList><span>›</span>{Array.from({ length: 18 }, (_, i) => <i key={i} />)}</BackList>
        </BackWindow>
        <FrontWindow>
          <Tabs>
            <Lights><i /><i /><i /></Lights>
            <Tab><Globe /><TabTitle>encode - Your personal learning</TabTitle><Close /></Tab>
            <Tab $active><Shield w={14} h={16} /><TabTitle>Learn to use two basic array me</TabTitle><Close /></Tab>
            <NewTab><Svg s={12}><path d="M6 0v12M0 6h12" stroke="#5f6065" strokeWidth="1.700" /></Svg></NewTab>
          </Tabs>
          <Tools>
            <NavIcons>
              <Svg s={16}><path d="M14.500 8H2M8 2L2 8l6 6" stroke="#b9babd" strokeWidth="1.500" /></Svg>
              <Svg s={16}><path d="M1.500 8H14M8 2l6 6-6 6" stroke="#b9babd" strokeWidth="1.500" /></Svg>
              <Svg s={16}><path d="M13 4.200A6 6 0 1 0 14 9" stroke="#b9babd" strokeWidth="1.500" /><path d="M14.500 1v5.500H9z" fill="#b9babd" /></Svg>
            </NavIcons>
            <Omnibox>
              <Svg w={14} h={14}><rect x="3" y="5" width="8.500" height="7.500" rx="1" fill="#505156" /><path d="M4.800 5.500V4a2.400 2.400 0 0 1 4.800 0v1.500" stroke="#505156" strokeWidth="1.300" /></Svg>
              <Url><b>apply.lambdaschool.com</b>/courses/web-precourse/lessons/javascript-callback-functions/topic/le...</Url>
              <Svg s={16}><path d={Star} transform="translate(.6 .6) scale(.92)" stroke="#44454a" strokeWidth="1.400" /></Svg>
            </Omnibox>
            <Extensions>
              {extIcons.map((icon, i) => <Ext key={i}>{icon}</Ext>)}
              <Rule /><Avatar>T</Avatar><Dots />
            </Extensions>
          </Tools>
          <Bookmarks>
            <Mark $w={68} $g={9}><AppsGrid />Apps</Mark>
            <Mark $w={83} $g={7}><Folder />Encode</Mark>
            <Mark $w={66} $g={7}><Folder />IPFS</Mark>
            <Mark $w={33}><Svg w={15} h={12}><rect width="15" height="12" rx="2.500" fill="#f33a2f" /><path d="M6 3.500L10 6 6 8.500z" fill="#fff" /></Svg></Mark>
            <Mark $w={134} $g={9}><Globe />Your project title</Mark>
            <Mark $w={150} $g={9}><Globe />encode - master y...</Mark>
            <Mark $w={148} $g={7} $last><Folder />Other Bookmarks</Mark>
          </Bookmarks>
          <Page>
            <SiteHeader>
              <Shield w={34} h={39} />
              <Wordmark>Lambda</Wordmark>
              <NavLink $gap={14}>Precourse</NavLink>
              <Spacer />
              <NavLink>Sign In</NavLink>
              <NavLink $gap={30}>Apply</NavLink>
              <NavLink $gap={30}>Student Profile</NavLink>
              <Gravatar width="45" height="45" viewBox="0 0 45 45">
                <path d="M22.500 0A22.500 22.500 0 0 1 38 38.500c-2-4-5-6.500-9-7.500a12.500 12.500 0 1 0-13 0c-4 1-7 3.500-9 7.500A22.500 22.500 0 0 1 22.500 0z" fill="#d1d1d1" />
              </Gravatar>
            </SiteHeader>
            <Columns>
              <Sidebar>
                <SearchBox>Search ...<Svg s={14}><circle cx="5.500" cy="5.500" r="4.200" stroke="#333438" strokeWidth="1.700" /><path d="M8.800 8.800L13 13" stroke="#333438" strokeWidth="2" /></Svg></SearchBox>
                <Progress><div /></Progress>
                <SideTitle>Course Navigation</SideTitle>
                {lessons.map((name) => (
                  <Item key={name}><Chevron /><ItemText>{name}</ItemText></Item>
                ))}
                <Item $open><Chevron open /><ItemText>JavaScript: Callback Functions</ItemText></Item>
                <SubItem>Learn to demonstrate<i /></SubItem>
              </Sidebar>
              <Main>
                <Heading $m="0">Learn to use two basic array methods that use callbacks.</Heading>
                <Objective><span>Objective Progress:</span><Dot $on /><Dot $on /><Dot /><Dot /></Objective>
                <BackButton><Svg s={12}><path d="M11.500 6H1.500M5.500 2l-4 4 4 4" stroke="#7d7d80" strokeWidth="1.800" /></Svg>Back To Lesson</BackButton>
                <Video>
                  <VideoTop>
                    <Svg s={40}><circle cx="20" cy="20" r="20" fill={red} /><g transform="translate(8 8)"><OutlineShield w={24} h={26} /></g></Svg>
                    <VideoTitle>Lambda School: Using Callbacks in Array...</VideoTitle>
                    <VideoAction $w={72} $mr={19}><Svg s={24}><circle cx="12" cy="12" r="10.300" fill="#f1f2f3" /><path d="M12 6v6.500l5 3" stroke="#0c2f42" strokeWidth="2" /></Svg>Watch later</VideoAction>
                    <VideoAction $w={37}><Svg s={24}><path d="M13 4l9 7-9 7v-4c-5 0-8 1-11 5 1-6 4-10 11-11z" fill="#f1f2f3" /></Svg>Share</VideoAction>
                  </VideoTop>
                  <Poster>
                    <OutlineShield w={68} h={73} />
                    <strong>Using Callbacks in</strong>
                    <strong>Array Methods</strong>
                    <span>{"Lambda School  • Intro to Web Dev"}</span>
                  </Poster>
                  <Play><Svg w={18} h={20}><path d="M0 0l18 10L0 20z" fill="#fff" /></Svg></Play>
                </Video>
                <Heading $m="34px 0 21px">More Array Methods</Heading>
                <Para>
                  <Word $w={337}>We already know about and use array methods,</Word>
                  <Code $w={36}>push</Code><Word $w={18}>,</Word>
                  <Code $w={27}>pop</Code><Word $w={17}>,</Word>
                  <Code $w={45}>shift</Code><Word $w={17}>,</Word>
                  <Code $w={63}>unshift</Code><Word $w={47}>, and</Word>
                  <Code $w={55}>length</Code><Word $w={120}>. But there are a</Word>
                </Para>
              </Main>
            </Columns>
            <StatusShade />
          </Page>
        </FrontWindow>
      </Stage>
      <Cursor width="14" height="20" viewBox="0 0 14 20"><path d="M2 1v13l3-3 2.500 6 2.500-1-2.500-5.500H12z" fill="#111" stroke="#eee" /></Cursor>
      <DockBar>
        {dockApps.map((a, i) => (
          <DockItem key={i}>{a.icon}{a.run && <i />}{a.badge && <Badge>{a.badge}</Badge>}</DockItem>
        ))}
        <DockRule />
        <DockItem $w={42.2}><Svg w={26} h={38}><path d="M1 0h16l8 10v27H1z" fill="#f6f6f6" /><path d="M17 0l8 10h-8z" fill="#d4d4d6" /><rect x="5" y="15" width="16" height="14" fill="#8f9195" /><path d="M5 25h16v6H5z" fill="#55565b" /></Svg></DockItem>
        <DockItem $w={42.2}><Thumb $bg="#ededee"><Svg w={38} h={22}><path d="M3 4h9M3 7h7M3 10h9M16 3h7M16 6h6M27 4h7M27 8h8M27 12h7M27 16h8" stroke="#c4c5c9" /></Svg></Thumb><Corner $r={4}><Finder s={12} /></Corner></DockItem>
        <DockItem $w={42.2}><Thumb $bg="#e6e5ea" $h={26} $mt={5} /><Corner><Chrome s={14} /></Corner></DockItem>
        {[0, 1, 2, 3, 4, 5, 6].map((n) => (
          <DockItem key={n} $w={42.2}><Thumb $h={n === 2 ? 32 : 22} $mt={n === 2 ? 2 : 7}><CodeLines tall={n === 2} /></Thumb><Corner><AtomBadge /></Corner></DockItem>
        ))}
        <DockItem $w={42.2}><Thumb $bg="#f5f5f6" $h={28} $mt={4}><Svg w={38} h={28}><path d="M2 3h8M2 7h6M2 12h7M13 10h6M13 14h5" stroke="#c0c0ca" /><rect x="12" y="3" width="12" height="8" fill="#25262b" /><rect x="12" y="13" width="9" height="13" fill="#4d6a8c" /></Svg></Thumb><Corner><Slack s={13} /></Corner></DockItem>
        <DockItem $w={42.2}><Svg w={30} h={38}><path d="M1 5h28l-4 31c-4 2-16 2-20 0z" fill="#d7d9dc" /><ellipse cx="15" cy="6" rx="14" ry="4.500" fill="#f0f1f2" /><path d="M4 5l4-2 5 3 5-4 4 3 4 1-5 3H9z" fill="#9a9ea6" /><path d="M7 12l2 22M15 12v23M23 12l-2 22M6 18c6 3 13-3 18 1M6 27c6 3 12-2 17 0" stroke="#bfc2c7" /></Svg></DockItem>
      </DockBar>
    </Desktop>
  );
}
